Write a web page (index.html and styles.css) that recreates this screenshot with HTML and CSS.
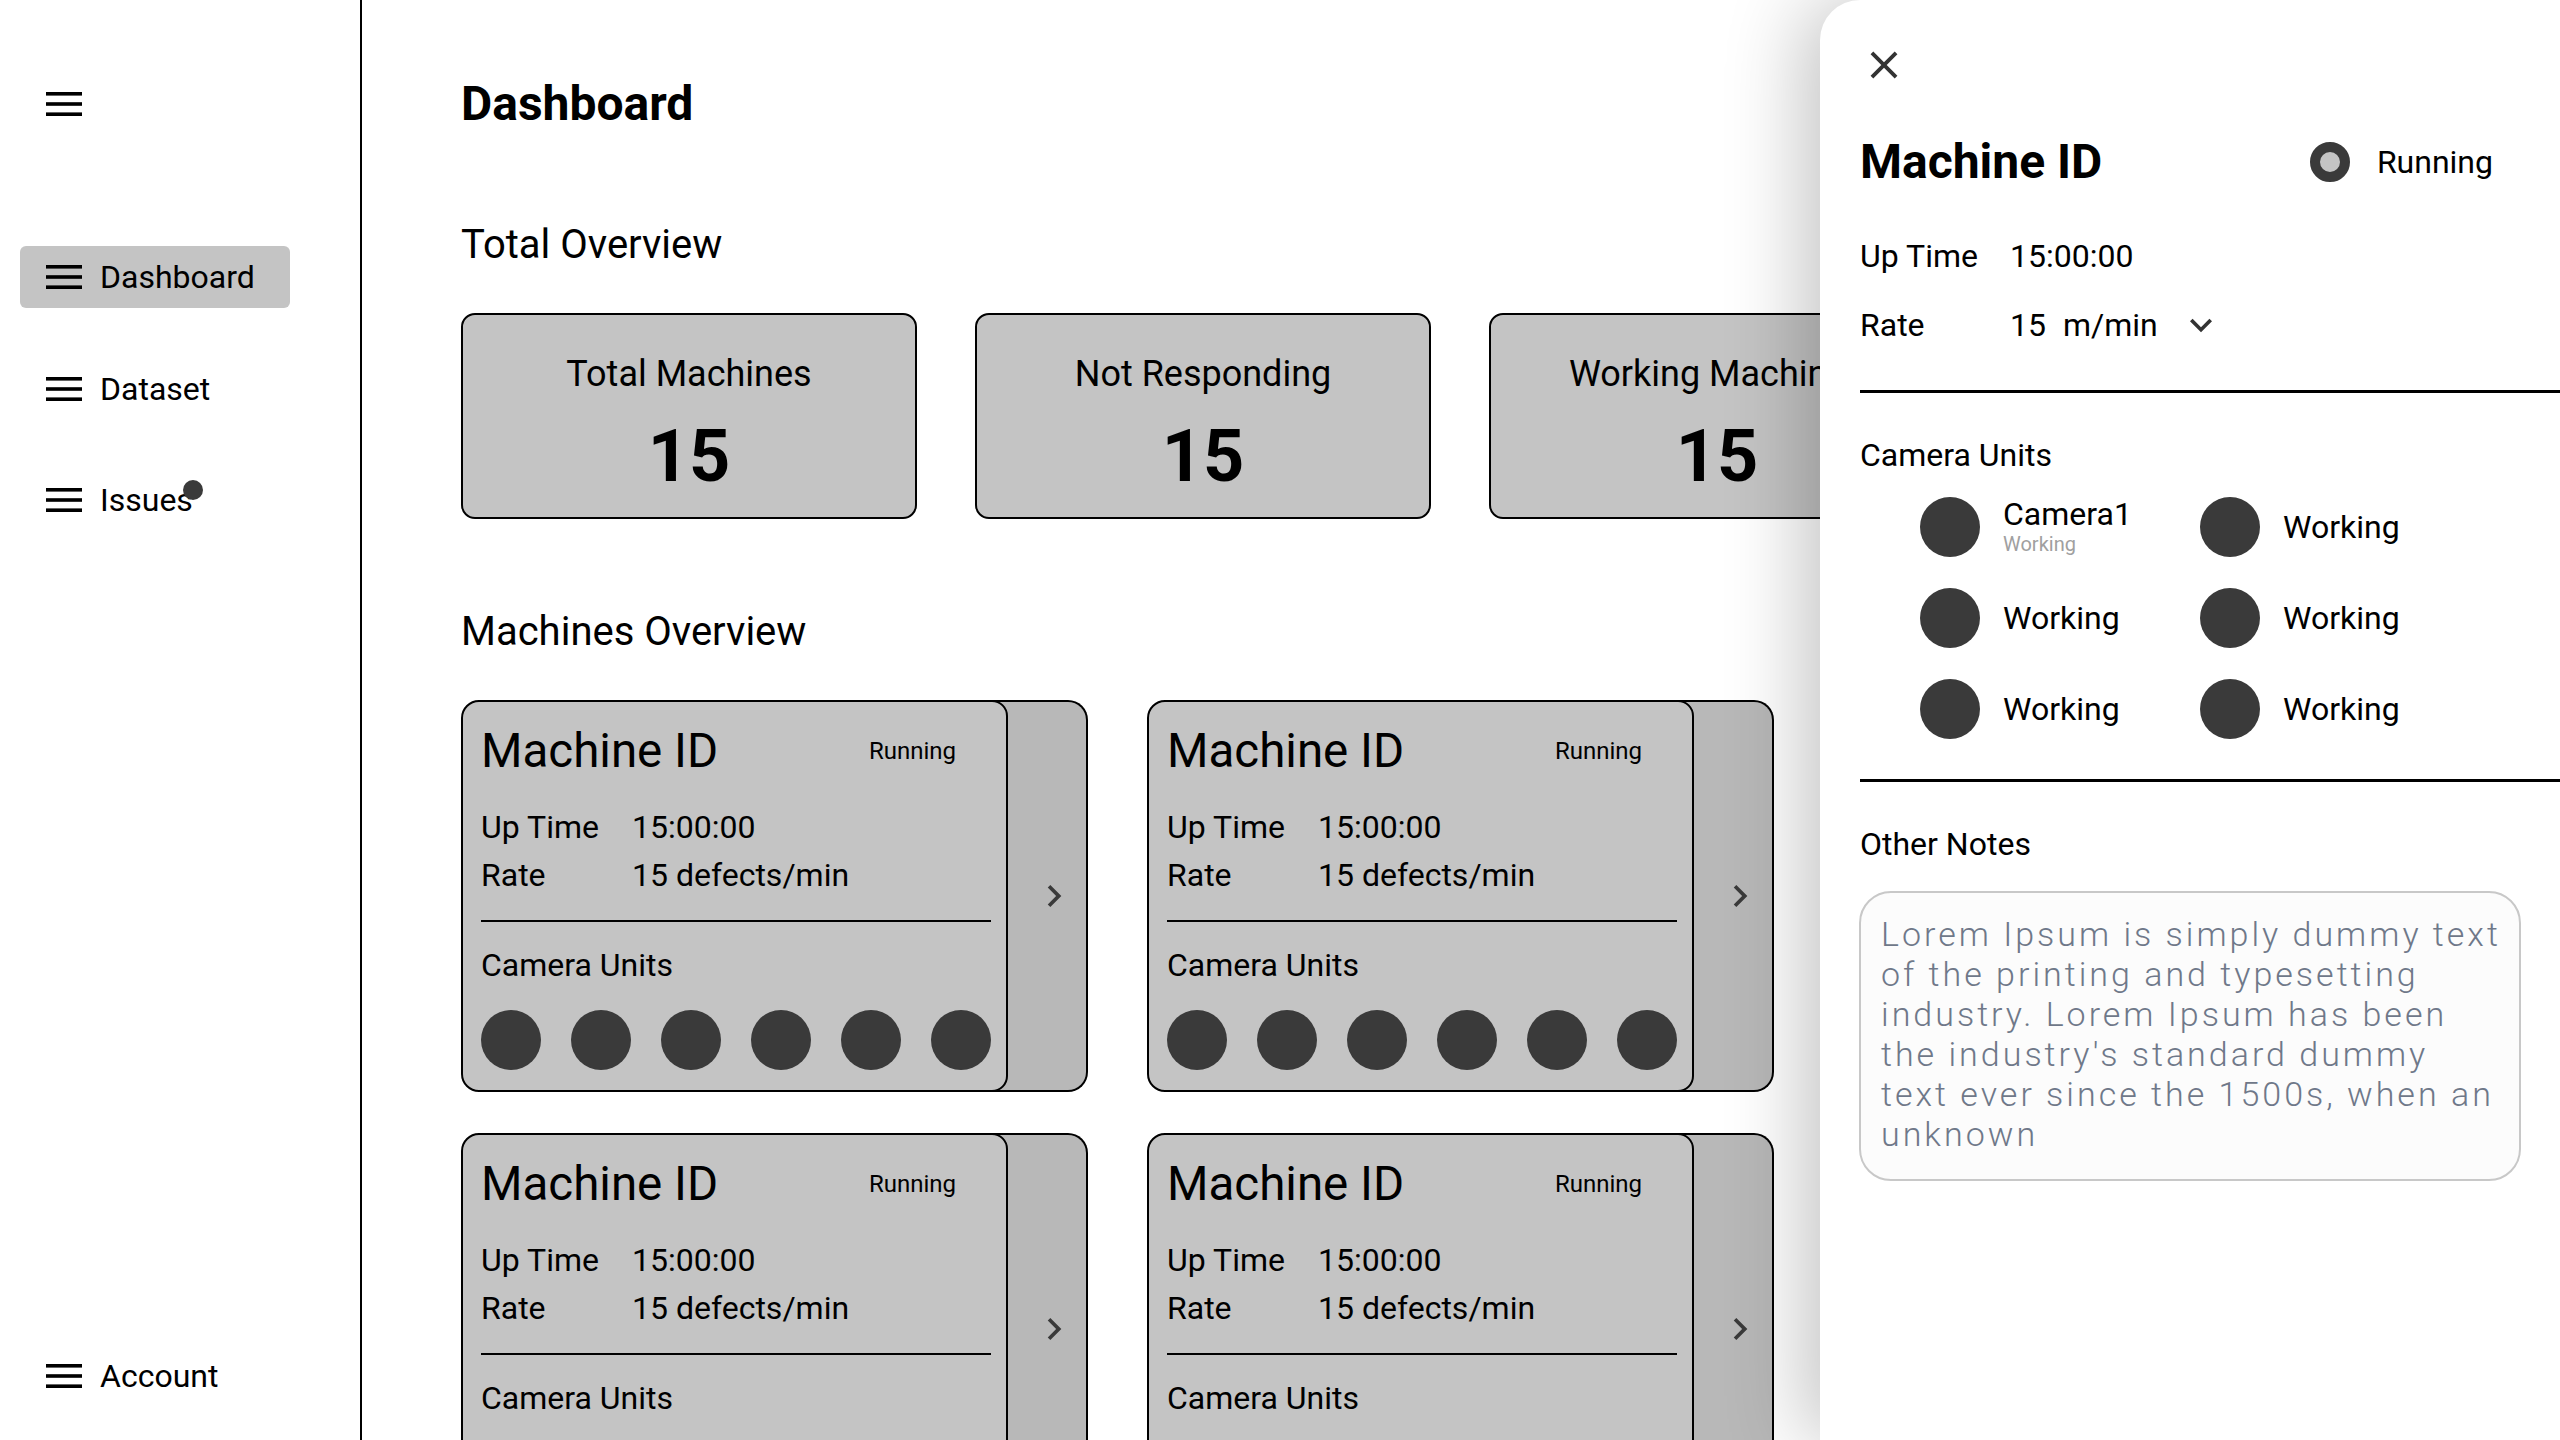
FILE: index.html
```html
<!DOCTYPE html>
<html lang="en">
<head>
<meta charset="utf-8">
<title>Dashboard</title>
<link rel="stylesheet" href="styles.css">
</head>
<body>
<div class="app">
  <aside class="sidebar">
    <button class="menu-btn" aria-label="Menu">
      <svg class="menu-icon" viewBox="0 0 36 24" width="36" height="24"><rect y="0" width="36" height="3.6"/><rect y="10.2" width="36" height="3.6"/><rect y="20.4" width="36" height="3.6"/></svg>
    </button>
    <nav class="nav">
      <a class="nav-item active" href="#">
        <svg class="menu-icon" viewBox="0 0 36 24" width="36" height="24"><rect y="0" width="36" height="3.6"/><rect y="10.2" width="36" height="3.6"/><rect y="20.4" width="36" height="3.6"/></svg>
        <span>Dashboard</span>
      </a>
      <a class="nav-item" href="#">
        <svg class="menu-icon" viewBox="0 0 36 24" width="36" height="24"><rect y="0" width="36" height="3.6"/><rect y="10.2" width="36" height="3.6"/><rect y="20.4" width="36" height="3.6"/></svg>
        <span>Dataset</span>
      </a>
      <a class="nav-item" href="#">
        <svg class="menu-icon" viewBox="0 0 36 24" width="36" height="24"><rect y="0" width="36" height="3.6"/><rect y="10.2" width="36" height="3.6"/><rect y="20.4" width="36" height="3.6"/></svg>
        <span class="badge-wrap">Issues<span class="badge"></span></span>
      </a>
    </nav>
    <a class="nav-item account" href="#">
      <svg class="menu-icon" viewBox="0 0 36 24" width="36" height="24"><rect y="0" width="36" height="3.6"/><rect y="10.2" width="36" height="3.6"/><rect y="20.4" width="36" height="3.6"/></svg>
      <span>Account</span>
    </a>
  </aside>

  <main class="main">
    <h1 class="page-title">Dashboard</h1>
    <h2 class="section-title">Total Overview</h2>
    <div class="stats">
      <div class="stat-card"><div class="stat-label">Total Machines</div><div class="stat-value">15</div></div>
      <div class="stat-card"><div class="stat-label">Not Responding</div><div class="stat-value">15</div></div>
      <div class="stat-card"><div class="stat-label">Working Machines</div><div class="stat-value">15</div></div>
    </div>

    <h2 class="section-title machines-title">Machines Overview</h2>
    <div class="machine-grid">
      <div class="machine-card">
        <div class="machine-body">
          <div class="machine-head"><span class="machine-name">Machine ID</span><span class="machine-status">Running</span></div>
          <div class="machine-info"><span>Up Time</span><span>15:00:00</span><span>Rate</span><span>15 defects/min</span></div>
          <div class="rule"></div>
          <div class="cam-title">Camera Units</div>
          <div class="cams"><span class="dot"></span><span class="dot"></span><span class="dot"></span><span class="dot"></span><span class="dot"></span><span class="dot"></span></div>
        </div>
        <div class="machine-tab"><svg viewBox="0 0 24 24" width="44" height="44"><path d="M10 6L8.59 7.41 13.17 12l-4.58 4.59L10 18l6-6z"/></svg></div>
      </div>
      <div class="machine-card">
        <div class="machine-body">
          <div class="machine-head"><span class="machine-name">Machine ID</span><span class="machine-status">Running</span></div>
          <div class="machine-info"><span>Up Time</span><span>15:00:00</span><span>Rate</span><span>15 defects/min</span></div>
          <div class="rule"></div>
          <div class="cam-title">Camera Units</div>
          <div class="cams"><span class="dot"></span><span class="dot"></span><span class="dot"></span><span class="dot"></span><span class="dot"></span><span class="dot"></span></div>
        </div>
        <div class="machine-tab"><svg viewBox="0 0 24 24" width="44" height="44"><path d="M10 6L8.59 7.41 13.17 12l-4.58 4.59L10 18l6-6z"/></svg></div>
      </div>
      <div class="machine-card">
        <div class="machine-body">
          <div class="machine-head"><span class="machine-name">Machine ID</span><span class="machine-status">Running</span></div>
          <div class="machine-info"><span>Up Time</span><span>15:00:00</span><span>Rate</span><span>15 defects/min</span></div>
          <div class="rule"></div>
          <div class="cam-title">Camera Units</div>
          <div class="cams"><span class="dot"></span><span class="dot"></span><span class="dot"></span><span class="dot"></span><span class="dot"></span><span class="dot"></span></div>
        </div>
        <div class="machine-tab"><svg viewBox="0 0 24 24" width="44" height="44"><path d="M10 6L8.59 7.41 13.17 12l-4.58 4.59L10 18l6-6z"/></svg></div>
      </div>
      <div class="machine-card">
        <div class="machine-body">
          <div class="machine-head"><span class="machine-name">Machine ID</span><span class="machine-status">Running</span></div>
          <div class="machine-info"><span>Up Time</span><span>15:00:00</span><span>Rate</span><span>15 defects/min</span></div>
          <div class="rule"></div>
          <div class="cam-title">Camera Units</div>
          <div class="cams"><span class="dot"></span><span class="dot"></span><span class="dot"></span><span class="dot"></span><span class="dot"></span><span class="dot"></span></div>
        </div>
        <div class="machine-tab"><svg viewBox="0 0 24 24" width="44" height="44"><path d="M10 6L8.59 7.41 13.17 12l-4.58 4.59L10 18l6-6z"/></svg></div>
      </div>
    </div>
  </main>

  <section class="detail">
    <button class="close-btn" aria-label="Close">
      <svg viewBox="0 0 24 24" width="46" height="46"><path d="M19 6.41L17.59 5 12 10.59 6.41 5 5 6.41 10.59 12 5 17.59 6.41 19 12 13.41 17.59 19 19 17.59 13.41 12z"/></svg>
    </button>
    <div class="detail-head">
      <h2 class="detail-title">Machine ID</h2>
      <div class="detail-status"><span class="radio"></span><span>Running</span></div>
    </div>
    <div class="detail-info">
      <span>Up Time</span><span>15:00:00</span>
      <span>Rate</span>
      <span class="rate-value"><span>15</span><span class="rate-unit">m/min</span><svg class="expand" viewBox="0 0 24 24" width="44" height="44"><path d="M16.59 8.59L12 13.17 7.41 8.59 6 10l6 6 6-6z"/></svg></span>
    </div>
    <div class="panel-rule"></div>
    <div class="panel-label">Camera Units</div>
    <div class="cam-grid">
      <div class="cam-item"><span class="dot"></span><span class="cam-text"><span class="cam-name">Camera1</span><span class="cam-sub">Working</span></span></div>
      <div class="cam-item"><span class="dot"></span><span>Working</span></div>
      <div class="cam-item"><span class="dot"></span><span>Working</span></div>
      <div class="cam-item"><span class="dot"></span><span>Working</span></div>
      <div class="cam-item"><span class="dot"></span><span>Working</span></div>
      <div class="cam-item"><span class="dot"></span><span>Working</span></div>
    </div>
    <div class="panel-rule second"></div>
    <div class="panel-label notes-label">Other Notes</div>
    <div class="notes">Lorem Ipsum is simply dummy text of the printing and typesetting industry. Lorem Ipsum has been the industry's standard dummy text ever since the 1500s, when an unknown</div>
  </section>
</div>
</body>
</html>
```

FILE: styles.css
```css
* { box-sizing: border-box; }

html, body {
  margin: 0;
  padding: 0;
}

body {
  width: 2560px;
  height: 1440px;
  overflow: hidden;
  background: #ffffff;
  color: #000;
  font-family: Roboto, "Noto Sans", "Liberation Sans", sans-serif;
}

.app {
  position: relative;
  display: flex;
  width: 2560px;
  height: 1440px;
  overflow: hidden;
}

/* Sidebar */
.sidebar {
  width: 362px;
  flex-shrink: 0;
  height: 1440px;
  border-right: 2px solid #000;
  display: flex;
  flex-direction: column;
  padding-top: 92px;
}

.menu-btn {
  display: block;
  margin: 0 0 0 46px;
  padding: 0;
  width: 36px;
  height: 24px;
  border: 0;
  background: none;
}

.menu-icon {
  display: block;
  fill: #000;
  flex-shrink: 0;
}

.nav {
  margin-top: 130px;
  display: flex;
  flex-direction: column;
  gap: 49.5px;
}

.nav-item {
  display: flex;
  align-items: center;
  gap: 18px;
  width: 270px;
  height: 62px;
  margin-left: 20px;
  padding-left: 26px;
  border-radius: 6px;
  font-size: 32px;
  line-height: 38px;
  color: #000;
  text-decoration: none;
}

.nav-item.active {
  background: #c4c4c4;
}

.nav-item.account {
  margin-top: auto;
  margin-bottom: 33.5px;
}

.badge-wrap {
  position: relative;
}

.badge {
  position: absolute;
  right: -10px;
  top: -1px;
  width: 20px;
  height: 20px;
  border-radius: 50%;
  background: #3a3a3a;
}

/* Main */
.main {
  flex: 1;
  min-width: 0;
  padding: 76px 0 0 99px;
  overflow: hidden;
}

.page-title {
  margin: 0;
  font-size: 48px;
  line-height: 56px;
  font-weight: 700;
}

.section-title {
  margin: 89px 0 0;
  font-size: 40px;
  line-height: 48px;
  font-weight: 400;
}

.stats {
  display: flex;
  gap: 58px;
  margin-top: 44px;
}

.stat-card {
  flex-shrink: 0;
  width: 456px;
  height: 206px;
  border: 2px solid #000;
  border-radius: 14px;
  background: #c4c4c4;
  text-align: center;
  padding-top: 38px;
  white-space: nowrap;
}

.stat-label {
  font-size: 36px;
  line-height: 42px;
}

.stat-value {
  margin-top: 20px;
  font-size: 72px;
  line-height: 84px;
  font-weight: 700;
}

.section-title.machines-title {
  margin-top: 89px;
}

.machine-grid {
  display: grid;
  grid-template-columns: 627px 627px;
  column-gap: 59px;
  row-gap: 41px;
  margin-top: 44px;
}

.machine-card {
  display: flex;
  height: 392px;
}

.machine-body {
  position: relative;
  z-index: 1;
  width: 547px;
  flex-shrink: 0;
  background: #c4c4c4;
  border: 2px solid #000;
  border-radius: 18px 16px 16px 18px;
  padding: 21px 15px 0 18px;
}

.machine-tab {
  flex: 1;
  margin-left: -20px;
  padding-left: 34px;
  background: #b8b8b8;
  border: 2px solid #000;
  border-left: 0;
  border-radius: 0 20px 20px 0;
  display: flex;
  align-items: center;
  justify-content: center;
}

.machine-tab svg {
  display: block;
  fill: #3a3a3a;
}

.machine-head {
  display: flex;
  align-items: center;
  justify-content: space-between;
  height: 56px;
}

.machine-name {
  font-size: 47.5px;
  line-height: 56px;
}

.machine-status {
  font-size: 24px;
  line-height: 28px;
  margin-right: 35px;
}

.machine-info {
  display: grid;
  grid-template-columns: 151px auto;
  margin-top: 24px;
  font-size: 32px;
  line-height: 48px;
}

.rule {
  height: 2px;
  background: #000;
  margin-top: 21px;
}

.cam-title {
  margin-top: 23px;
  font-size: 32px;
  line-height: 40px;
}

.cams {
  display: flex;
  gap: 30px;
  margin-top: 25px;
}

.dot {
  display: block;
  width: 60px;
  height: 60px;
  flex-shrink: 0;
  border-radius: 50%;
  background: #3a3a3a;
}

/* Detail panel */
.detail {
  position: absolute;
  top: 0;
  right: 0;
  width: 740px;
  height: 1440px;
  background: #fff;
  border-top-left-radius: 40px;
  box-shadow: -16px 0 80px rgba(0, 0, 0, 0.24);
  padding: 42px 0 0 40px;
  z-index: 5;
}

.close-btn {
  display: block;
  margin: 0 0 0 1px;
  padding: 0;
  border: 0;
  background: none;
  width: 46px;
  height: 46px;
}

.close-btn svg {
  display: block;
  fill: #333;
}

.detail-head {
  display: flex;
  align-items: center;
  height: 56px;
  margin-top: 46px;
}

.detail-title {
  margin: 0;
  font-size: 48px;
  line-height: 56px;
  font-weight: 700;
}

.detail-status {
  margin-left: auto;
  margin-right: 67px;
  display: flex;
  align-items: center;
  gap: 27px;
  font-size: 32px;
  line-height: 40px;
}

.radio {
  display: block;
  width: 40px;
  height: 40px;
  border-radius: 50%;
  border: 10px solid #3a3a3a;
  background: #c4c4c4;
}

.detail-info {
  display: grid;
  grid-template-columns: 150px auto;
  row-gap: 21px;
  margin-top: 42px;
  font-size: 32px;
  line-height: 48px;
}

.rate-value {
  display: flex;
  align-items: center;
}

.rate-unit {
  margin-left: 17px;
}

.expand {
  display: block;
  margin-left: 21px;
  fill: #333;
}

.panel-rule {
  height: 3px;
  background: #000;
  margin-top: 41px;
}

.panel-rule.second {
  margin-top: 40px;
}

.panel-label {
  margin-top: 42px;
  font-size: 32px;
  line-height: 40px;
}

.cam-grid {
  display: grid;
  grid-template-columns: 280px 280px;
  row-gap: 31px;
  margin: 22px 0 0 60px;
}

.cam-item {
  display: flex;
  align-items: center;
  gap: 23px;
  height: 60px;
  font-size: 32px;
  line-height: 36px;
}

.cam-text {
  display: flex;
  flex-direction: column;
  margin-top: -2px;
}

.cam-name {
  font-size: 32px;
  line-height: 36px;
}

.cam-sub {
  font-size: 20px;
  line-height: 24px;
  color: #a0a0a0;
}

.notes {
  margin: 27px 0 0 -1px;
  width: 662px;
  height: 290px;
  border: 2px solid #c8c8c8;
  border-radius: 32px;
  background: #fcfcfc;
  padding: 21px 12px 21px 20px;
  font-size: 34px;
  line-height: 40px;
  font-weight: 300;
  letter-spacing: 3px;
  color: #6f7889;
}
```
